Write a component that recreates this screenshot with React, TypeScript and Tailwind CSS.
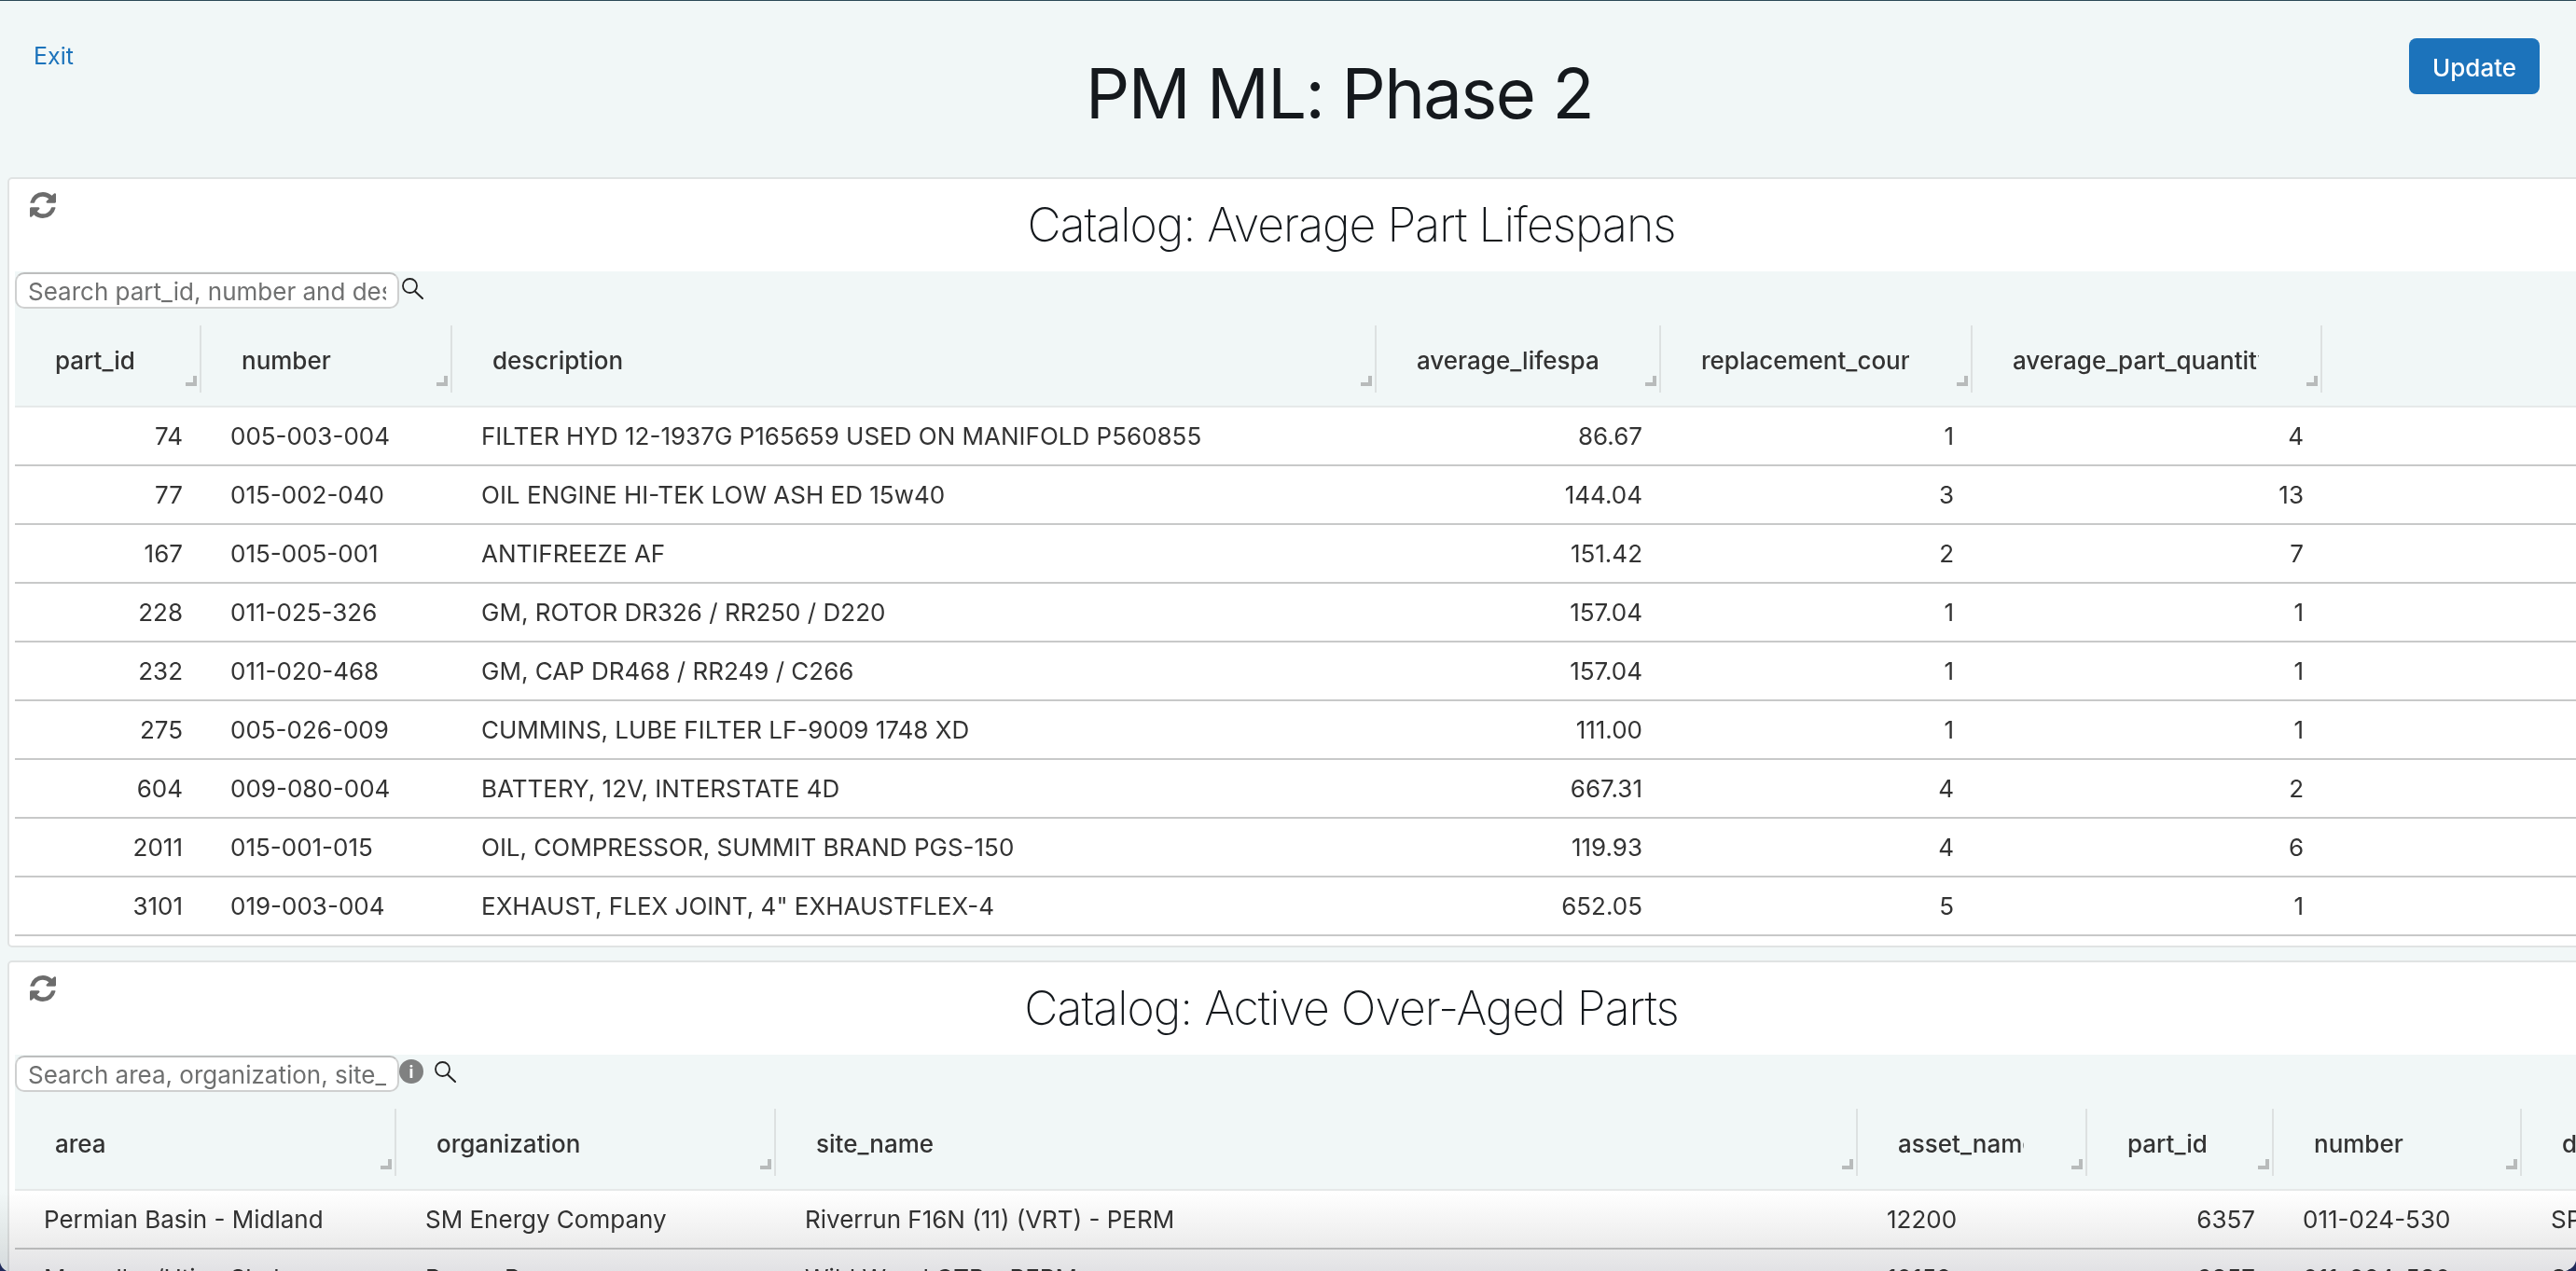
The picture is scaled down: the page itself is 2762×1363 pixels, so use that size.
import React from 'react';

type Column = { name: string; right?: boolean };

const lifespanColumns: Column[] = [
  { name: 'part_id', right: true },
  { name: 'number' },
  { name: 'description' },
  { name: 'average_lifespan', right: true },
  { name: 'replacement_count', right: true },
  { name: 'average_part_quantity', right: true },
];

const lifespanRows = [
  ['74', '005-003-004', 'FILTER HYD 12-1937G P165659 USED ON MANIFOLD P560855', '86.67', '1', '4'],
  ['77', '015-002-040', 'OIL ENGINE HI-TEK LOW ASH ED 15w40', '144.04', '3', '13'],
  ['167', '015-005-001', 'ANTIFREEZE AF', '151.42', '2', '7'],
  ['228', '011-025-326', 'GM, ROTOR DR326 / RR250 / D220', '157.04', '1', '1'],
  ['232', '011-020-468', 'GM, CAP DR468 / RR249 / C266', '157.04', '1', '1'],
  ['275', '005-026-009', 'CUMMINS, LUBE FILTER LF-9009 1748 XD', '111.00', '1', '1'],
  ['604', '009-080-004', 'BATTERY, 12V, INTERSTATE 4D', '667.31', '4', '2'],
  ['2011', '015-001-015', 'OIL, COMPRESSOR, SUMMIT BRAND PGS-150', '119.93', '4', '6'],
  ['3101', '019-003-004', 'EXHAUST, FLEX JOINT, 4" EXHAUSTFLEX-4', '652.05', '5', '1'],
];

const overAgedColumns: Column[] = [
  { name: 'area' },
  { name: 'organization' },
  { name: 'site_name' },
  { name: 'asset_name' },
  { name: 'part_id', right: true },
  { name: 'number' },
  { name: 'description' },
];

const overAgedRows = [
  ['Permian Basin - Midland', 'SM Energy Company', 'Riverrun F16N (11) (VRT) - PERM', '12200', '6357', '011-024-530', 'SPARK PLUG'],
  ['Marcellus/Utica Shale', 'Range Resources', 'Wild Wood CTB - PERM', '10152', '6357', '011-024-530', 'SPARK PLUG'],
];

const RefreshIcon = () => (
  <svg viewBox="128 128 1536 1536" className="h-[28px] w-[28px] fill-[#6c6c6c]">
    <path d="M1639 1056q0 5-1 7-64 268-268 434.5t-478 166.5q-146 0-282.5-55t-243.5-157l-129 129q-19 19-45 19t-45-19-19-45v-448q0-26 19-45t45-19h448q26 0 45 19t19 45-19 45l-137 137q71 66 161 102t187 36q134 0 250-65t186-179q11-17 53-117 8-23 30-23h192q13 0 22.5 9.5t9.5 22.5zm25-800v448q0 26-19 45t-45 19h-448q-26 0-45-19t-19-45 19-45l138-138q-148-137-349-137-134 0-250 65t-186 179q-11 17-53 117-8 23-30 23h-199q-13 0-22.5-9.5t-9.5-22.5v-7q65-268 270-434.5t480-166.5q146 0 284 55.500t245 156.500l130-129q19-19 45-19t45 19 19 45z" />
  </svg>
);

const SearchIcon = ({ className }: { className: string }) => (
  <svg viewBox="0 0 24 24" fill="none" className={className}>
    <circle cx="9.5" cy="9.5" r="7.5" stroke="#222" strokeWidth="1.8" />
    <path d="M15 15.5L23 23" stroke="#222" strokeWidth="2" strokeLinecap="round" />
  </svg>
);

function Table({ grid, columns, rows }: { grid: string; columns: Column[]; rows: string[][] }) {
  return (
    <div>
      <div className={`grid h-[105px] border-b-2 border-[#e6e9e9] bg-[#f1f7f7] ${grid}`}>
        {columns.map(col => (
          <div key={col.name} className="relative flex min-w-0 items-center pl-[43px] pr-[68px] pt-[6px]">
            <div className="overflow-hidden whitespace-nowrap text-[26px] font-medium text-[#333]">{col.name}</div>
            <div className="absolute right-[5px] top-[71px] h-[11px] w-[12px] border-b-4 border-r-4 border-[#b8bbbb]" />
            <div className="absolute right-0 top-[17px] h-[72px] w-[2px] bg-[#dde1e1]" />
          </div>
        ))}
      </div>
      {rows.map(row => (
        <div key={row.join()} className={`grid h-[63px] border-b-2 border-[#c8c9c9] bg-white ${grid}`}>
          {row.map((cell, i) => (
            <div
              key={i}
              className={
                columns[i].right
                  ? 'flex items-center justify-end overflow-hidden whitespace-nowrap pr-[20px] text-[26px] text-[#333]'
                  : 'flex items-center overflow-hidden whitespace-nowrap pl-[31px] text-[26px] text-[#333]'
              }
            >
              {cell}
            </div>
          ))}
        </div>
      ))}
    </div>
  );
}

function Panel({
  title,
  placeholder,
  info,
  children,
}: {
  title: string;
  placeholder: string;
  info?: boolean;
  children: React.ReactNode;
}) {
  return (
    <section className="ml-2 w-[2882px] rounded-[5px] border-2 border-[#e0e3e3] bg-white pb-[10px]">
      <div className="grid h-[99px] grid-cols-[1fr_auto_1fr]">
        <div className="pl-[22px] pt-[14px]">
          <RefreshIcon />
        </div>
        <h2 className="pt-[19px] text-[50px] leading-[60px] font-extralight tracking-[-1px] text-[#15191d] [font-feature-settings:'calt'_0]">
          {title}
        </h2>
      </div>
      <div className="ml-[6px]">
        <div className="flex h-[41px] items-start bg-[#f1f7f7] pt-px">
          <input
            readOnly
            placeholder={placeholder}
            className="h-[39px] w-[412px] rounded-[10px] border-2 border-[#cfd0d0] border-t-[#bdbebe] bg-white px-[12px] pt-[2px] text-[26px] text-[#333] placeholder:text-[#6f7070] outline-none"
          />
          {info && (
            <span className="mt-[4px] flex h-[26px] w-[26px] items-center justify-center rounded-full bg-[#808181] text-[18px] font-bold text-white">
              i
            </span>
          )}
          <SearchIcon className={info ? 'ml-[11px] mt-[5px] h-[24px] w-[24px]' : 'ml-[2px] mt-[5px] h-[24px] w-[24px]'} />
        </div>
        {children}
      </div>
    </section>
  );
}

export default function App() {
  return (
    <div className="relative h-[1363px] overflow-hidden border-t border-[#2c4a57] bg-[#f1f7f7] font-['Inter',sans-serif]">
      <header className="flex h-[189px]">
        <div className="w-[289px] pl-[36px] pt-[42px]">
          <a className="text-[25px] leading-[34px] text-[#1c73bb]">Exit</a>
        </div>
        <h1 className="flex-1 pt-[53px] text-center text-[74px] leading-[92px] font-normal tracking-[-1.6px] text-[#15191d] [font-feature-settings:'calt'_0]">
          PM ML: Phase 2
        </h1>
        <div className="w-[179px] pt-[40px]">
          <button className="h-[60px] w-[140px] rounded-[8px] bg-[#1c73bb] pt-[2px] text-[26px] font-medium text-white">
            Update
          </button>
        </div>
      </header>

      <div className="flex flex-col gap-[14px]">
        <Panel title="Catalog: Average Part Lifespans" placeholder="Search part_id, number and description">
          <Table
            grid="grid-cols-[200px_269px_991px_305px_334px_375px_1fr]"
            columns={lifespanColumns}
            rows={lifespanRows}
          />
        </Panel>

        <Panel title="Catalog: Active Over-Aged Parts" placeholder="Search area, organization, site_name" info>
          <Table
            grid="grid-cols-[409px_407px_1160px_246px_200px_266px_1fr]"
            columns={overAgedColumns}
            rows={overAgedRows}
          />
        </Panel>
      </div>

      {/* window shadow and rounded corners along the bottom edge */}
      <div className="pointer-events-none absolute inset-x-0 bottom-0 h-[85px] bg-gradient-to-b from-white via-[#ededed] via-[65%] to-[#e2e2e5] mix-blend-multiply" />
      <svg className="absolute bottom-0 left-0 h-[9px] w-[7px]" viewBox="0 0 7 9">
        <path d="M0 0C1 4 3 7 7 9H0Z" fill="#1f2a5a" />
      </svg>
      <svg className="absolute bottom-0 right-0 h-[11px] w-[11px]" viewBox="0 0 11 11">
        <path d="M11 0C10 5 6 9 0 11H11Z" fill="#1f2a5a" />
      </svg>
    </div>
  );
}
